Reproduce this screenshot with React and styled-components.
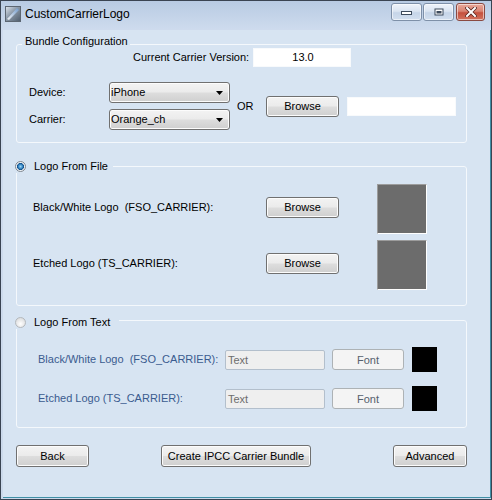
import React from 'react';
import styled, { createGlobalStyle } from 'styled-components';

const Global = createGlobalStyle`
  html, body { margin: 0; padding: 0; background: #ffffff; }
  body { font-family: "Liberation Sans", Arial, sans-serif; font-size: 11px; color: #000; }
  * { box-sizing: border-box; }
`;

const Window = styled.div`
  width: 492px;
  height: 500px;
  border: 1px solid #3a4452;
  background: linear-gradient(#b8cbe3, #cfdcee 30px, #cbd9eb);
  display: flex;
  flex-direction: column;
`;

const TitleBar = styled.div`
  height: 29px;
  display: flex;
  align-items: flex-start;
  padding-left: 4px;
  flex: none;
`;

const AppIcon = styled.svg`
  width: 16px;
  height: 16px;
  margin-top: 5px;
  flex: none;
`;

const Title = styled.div`
  margin-top: 6px;
  margin-left: 4px;
  font-size: 12px;
  line-height: 14px;
  color: #000;
`;

const Controls = styled.div`
  margin-left: auto;
  margin-right: 6px;
  margin-top: 2px;
  display: flex;
  gap: 1px;
`;

const CtlButton = styled.div`
  width: ${p => p.$w}px;
  height: 18px;
  border-radius: 3px;
  border: 1px solid ${p => (p.$close ? '#8a4a42' : '#7e90a8')};
  background: ${p =>
    p.$close
      ? 'linear-gradient(#e9a99b 0%, #d98473 45%, #c5503d 55%, #d2735f 100%)'
      : 'linear-gradient(#eef3fa 0%, #dbe5f2 45%, #c6d5e8 55%, #d3e0ef 100%)'};
  box-shadow: inset 0 0 0 1px rgba(255,255,255,0.55);
  display: flex;
  align-items: center;
  justify-content: center;
  margin-left: ${p => (p.$close ? 1 : 0)}px;
`;

const Client = styled.div`
  flex: 1;
  margin: 0 0 1px 2px;
  background: #d7e4f2;
  border-right: 1px solid #3f8fa6;
  border-bottom: 1px solid #3f8fa6;
  padding-left: 13px;
  display: flex;
  flex-direction: column;
`;

const Group = styled.div`
  position: relative;
  width: 451px;
  height: ${p => p.$h}px;
  margin-top: ${p => p.$mt}px;
  border: 1px solid #f4f8fc;
  border-radius: 3px;
  flex: none;
`;

const Caption = styled.div`
  position: absolute;
  left: ${p => p.$left}px;
  top: ${p => p.$top}px;
  padding: 0 ${p => p.$pr}px 0 ${p => p.$pl}px;
  background: #d7e4f2;
  line-height: 13px;
  display: flex;
  align-items: center;
  gap: 8px;
  white-space: nowrap;
`;

const Radio = styled.span`
  width: 11px;
  height: 11px;
  border-radius: 50%;
  border: 1px solid ${p => (p.$checked ? '#7f868e' : '#b4b8bc')};
  background: ${p =>
    p.$checked
      ? 'radial-gradient(circle at 50% 50%, #9fd6f3 0, #3b8cc8 2px, #13508a 3.2px, #eef2f6 3.8px, #ffffff 100%)'
      : 'radial-gradient(circle at 50% 65%, #ffffff 0, #f2f2f2 30%, #d2d4d6 100%)'};
  flex: none;
`;

const Label = styled.span`
  display: inline-block;
  width: ${p => (p.$w ? `${p.$w}px` : 'auto')};
  line-height: 13px;
  color: ${p => (p.$muted ? '#3a5b8f' : '#000')};
  white-space: nowrap;
  margin-bottom: ${p => p.$mb || 0}px;
`;

const VersionRow = styled.div`
  display: flex;
  align-items: center;
  padding: 3px 0 0 116px;
`;

const TextField = styled.div`
  width: ${p => p.$w}px;
  height: 19px;
  background: #ffffff;
  border: 1px solid #f8fafc;
  line-height: 17px;
  text-align: ${p => (p.$center ? 'center' : 'left')};
  padding-left: 2px;
  margin-left: ${p => p.$ml || 0}px;
`;

const SelectArea = styled.div`
  display: flex;
  align-items: center;
  margin-top: 15px;
  padding-left: 12px;
`;

const SelectColumn = styled.div`
  display: flex;
  flex-direction: column;
  gap: 6px;
`;

const SelectRow = styled.div`
  display: flex;
  align-items: center;
`;

const winButton = `
  border: 1px solid #707070;
  border-radius: 3px;
  background: linear-gradient(#f3f3f3 0%, #ebebeb 48%, #dddddd 52%, #cfcfcf 100%);
  box-shadow: inset 0 0 0 1px #fcfcfc;
`;

const Combo = styled.div`
  ${winButton}
  width: 121px;
  height: 21px;
  display: flex;
  align-items: center;
  padding-left: 1px;
  padding-right: 6px;
  line-height: 13px;
`;

const ComboText = styled.span`
  flex: 1;
`;

const Arrow = styled.svg`
  width: 7px;
  height: 4px;
  flex: none;
`;

const OrText = styled.span`
  width: 29px;
  margin-left: 7px;
  line-height: 13px;
`;

const Button = styled.div`
  ${winButton}
  width: ${p => p.$w}px;
  height: ${p => p.$h || 21}px;
  display: flex;
  align-items: center;
  justify-content: center;
  line-height: 13px;
  flex: none;
  margin-left: ${p => (p.$auto ? 'auto' : `${p.$ml || 0}px`)};
  margin-bottom: ${p => p.$mb || 0}px;
`;

const FileGrid = styled.div`
  display: grid;
  grid-template-columns: 233px 111px 50px;
  grid-auto-rows: 50px;
  row-gap: 6px;
  align-items: center;
  padding: 17px 0 0 16px;
`;

const Preview = styled.div`
  width: 50px;
  height: 50px;
  background: #6c6c6c;
  border: 1px solid;
  border-color: #9c9c9c #ffffff #ffffff #9c9c9c;
`;

const TextGrid = styled.div`
  display: grid;
  grid-template-columns: 187px 107px 80px 25px;
  grid-auto-rows: 25px;
  row-gap: 14px;
  align-items: center;
  padding: 26px 0 0 21px;
`;

const DisabledInput = styled.div`
  width: 100px;
  height: 20px;
  background: #efefef;
  border: 1px solid #b3bfcc;
  border-radius: 2px;
  color: #6d6d6d;
  line-height: 18px;
  padding-left: 2px;
`;

const DisabledButton = styled.div`
  width: 72px;
  height: 21px;
  background: #f4f4f4;
  border: 1px solid #adb2b5;
  border-radius: 3px;
  color: #56616d;
  display: flex;
  align-items: center;
  justify-content: center;
`;

const ColorSwatch = styled.div`
  width: 25px;
  height: 25px;
  background: #000;
`;

const Footer = styled.div`
  display: flex;
  width: 451px;
  margin-top: 17px;
`;

function ComboBox({ value }) {
  return (
    <Combo>
      <ComboText>{value}</ComboText>
      <Arrow viewBox="0 0 7 4">
        <path d="M0 0 H7 L3.5 4 Z" fill="#000" />
      </Arrow>
    </Combo>
  );
}

export default function App() {
  return (
    <>
      <Global />
      <Window>
        <TitleBar>
          <AppIcon viewBox="0 0 16 16">
            <defs>
              <linearGradient id="ig" x1="0" y1="0" x2="1" y2="1">
                <stop offset="0" stopColor="#dfe6ee" />
                <stop offset="0.45" stopColor="#8a98a8" />
                <stop offset="1" stopColor="#4d5b6b" />
              </linearGradient>
              <linearGradient id="ib" x1="0" y1="1" x2="1" y2="0">
                <stop offset="0" stopColor="#ffffff" />
                <stop offset="1" stopColor="#6f9bd0" />
              </linearGradient>
            </defs>
            <rect x="0.5" y="0.5" width="15" height="15" fill="url(#ig)" stroke="#5c6672" />
            <path d="M2 13 L12 2 L14 4 L4 14 Z" fill="url(#ib)" opacity="0.9" />
          </AppIcon>
          <Title>CustomCarrierLogo</Title>
          <Controls>
            <CtlButton $w={31}>
              <svg width="11" height="5" viewBox="0 0 11 5">
                <rect x="0.5" y="1.5" width="10" height="3" fill="#fff" stroke="#3d4b5c" />
              </svg>
            </CtlButton>
            <CtlButton $w={31}>
              <svg width="10" height="8" viewBox="0 0 10 8">
                <rect x="0.5" y="0.5" width="9" height="7" fill="#3d4b5c" />
                <rect x="1.5" y="1.5" width="7" height="5" fill="#fff" />
                <rect x="2.5" y="3" width="5" height="2.5" fill="#3d4b5c" />
              </svg>
            </CtlButton>
            <CtlButton $w={29} $close>
              <svg width="12" height="10" viewBox="0 0 12 10">
                <path d="M2 1 L10 9 M10 1 L2 9" stroke="#5a2620" strokeWidth="3.6" strokeLinecap="square" />
                <path d="M2 1 L10 9 M10 1 L2 9" stroke="#fff" strokeWidth="2" strokeLinecap="square" />
              </svg>
            </CtlButton>
          </Controls>
        </TitleBar>
        <Client>
          <Group $h={99} $mt={14}>
            <Caption $left={5} $top={-10} $pl={3} $pr={2}>Bundle Configuration</Caption>
            <VersionRow>
              <Label $w={120}>Current Carrier Version:</Label>
              <TextField $w={98} $center>13.0</TextField>
            </VersionRow>
            <SelectArea>
              <SelectColumn>
                <SelectRow>
                  <Label $w={80}>Device:</Label>
                  <ComboBox value="iPhone" />
                </SelectRow>
                <SelectRow>
                  <Label $w={80}>Carrier:</Label>
                  <ComboBox value="Orange_ch" />
                </SelectRow>
              </SelectColumn>
              <OrText>OR</OrText>
              <Button $w={73}>Browse</Button>
              <TextField $w={109} $ml={8} />
            </SelectArea>
          </Group>

          <Group $h={140} $mt={23}>
            <Caption $left={-2} $top={-7} $pl={0} $pr={5}>
              <Radio $checked />
              Logo From File
            </Caption>
            <FileGrid>
              <Label $mb={4}>Black/White Logo&nbsp; (FSO_CARRIER):</Label>
              <Button $w={73} $mb={4}>Browse</Button>
              <Preview />
              <Label $mb={4}>Etched Logo (TS_CARRIER):</Label>
              <Button $w={73} $mb={4}>Browse</Button>
              <Preview />
            </FileGrid>
          </Group>

          <Group $h={108} $mt={14}>
            <Caption $left={-2} $top={-5} $pl={0} $pr={9}>
              <Radio />
              Logo From Text
            </Caption>
            <TextGrid>
              <Label $muted>Black/White Logo&nbsp; (FSO_CARRIER):</Label>
              <DisabledInput>Text</DisabledInput>
              <DisabledButton>Font</DisabledButton>
              <ColorSwatch />
              <Label $muted>Etched Logo (TS_CARRIER):</Label>
              <DisabledInput>Text</DisabledInput>
              <DisabledButton>Font</DisabledButton>
              <ColorSwatch />
            </TextGrid>
          </Group>

          <Footer>
            <Button $w={73} $h={22}>Back</Button>
            <Button $w={150} $h={22} $ml={72}>Create IPCC Carrier Bundle</Button>
            <Button $w={74} $h={22} $auto>Advanced</Button>
          </Footer>
        </Client>
      </Window>
    </>
  );
}
